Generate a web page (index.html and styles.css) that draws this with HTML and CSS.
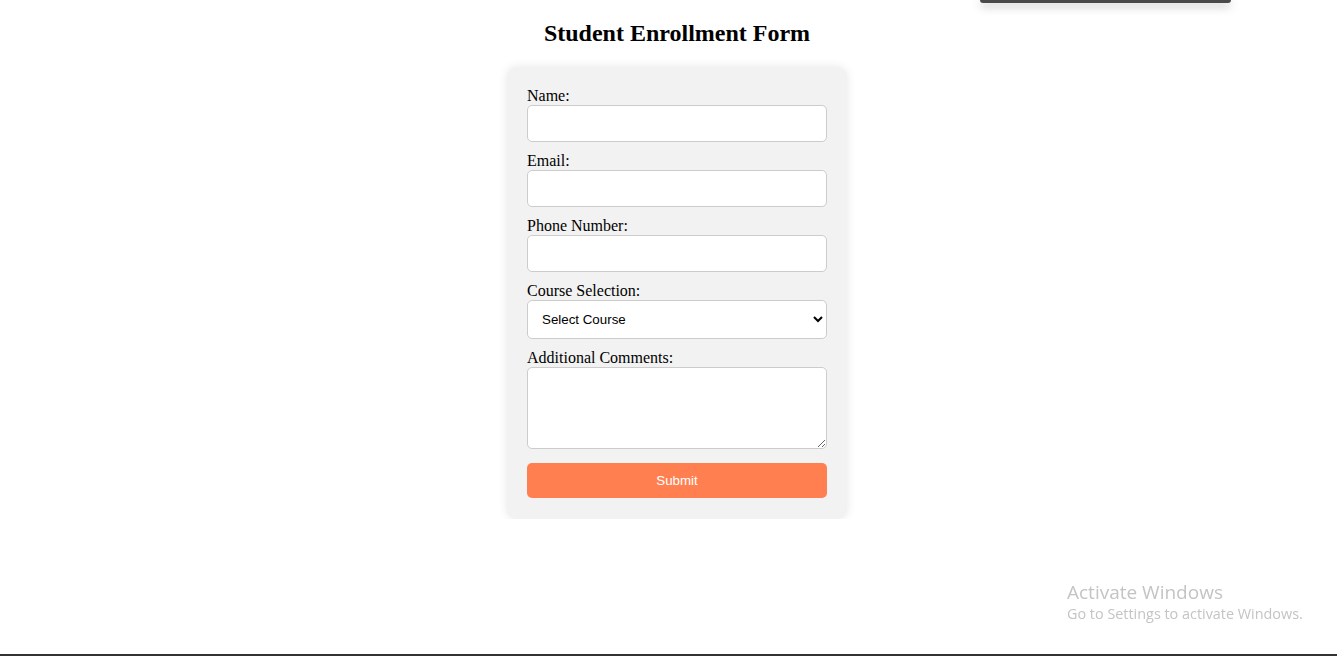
FILE: index.html
```html
<!DOCTYPE html>
<html lang="en">
<head>
<meta charset="utf-8">
<title>Student Enrollment Form</title>
<link rel="stylesheet" href="styles.css">
</head>
<body>
<div class="topbar"></div>
<h1 class="title">Student Enrollment Form</h1>
<form class="form">
  <label class="label" for="name">Name:</label>
  <input class="field" type="text" id="name">
  <label class="label" for="email">Email:</label>
  <input class="field" type="email" id="email">
  <label class="label" for="phone">Phone Number:</label>
  <input class="field" type="tel" id="phone">
  <label class="label" for="course">Course Selection:</label>
  <select class="field select" id="course">
    <option>Select Course</option>
  </select>
  <label class="label" for="comments">Additional Comments:</label>
  <textarea class="field area" id="comments" rows="4"></textarea>
  <button class="submit" type="button">Submit</button>
</form>
<div class="watermark">
  <div class="wm-title">Activate Windows</div>
  <div class="wm-sub">Go to Settings to activate Windows.</div>
</div>
<div class="bottomline"></div>
</body>
</html>
```
FILE: styles.css
```css
html, body {
  margin: 0;
  padding: 0;
  background: #fff;
}
body {
  font-family: "Liberation Serif", "Times New Roman", serif;
  font-size: 16px;
  color: #000;
  padding-top: 20px;
  padding-left: 17px;
}
.title {
  font-size: 24px;
  font-weight: bold;
  text-align: center;
  margin: 0 0 20px;
  line-height: 27px;
}
.form {
  width: 300px;
  margin: 0 auto;
  padding: 20px 20px 21px;
  background: #f2f2f2;
  border-radius: 10px;
  box-shadow: 0 0 10px rgba(0, 0, 0, 0.1);
}
.label {
  display: block;
  line-height: 18px;
}
.field {
  width: 100%;
  box-sizing: border-box;
  padding: 10px;
  margin: 0 0 10px;
  border: 1px solid #ccc;
  border-radius: 5px;
  font-family: "Liberation Sans", Arial, sans-serif;
  font-size: 13.33px;
  height: 37px;
  background: #fff;
}
.select {
  height: 39px;
  padding: 0 10px;
  color: #000;
}
.area {
  height: 82px;
  resize: vertical;
  vertical-align: top;
  margin-bottom: 14px;
}
.submit {
  display: block;
  width: 100%;
  height: 35px;
  border: none;
  border-radius: 5px;
  background: #ff7f50;
  color: #fff;
  font-family: "Liberation Sans", Arial, sans-serif;
  font-size: 13.33px;
  cursor: pointer;
}
.topbar {
  position: absolute;
  top: 0;
  left: 980px;
  width: 251px;
  height: 3px;
  background: #4a4a4a;
  border-radius: 0 0 6px 6px;
  box-shadow: 0 3px 10px rgba(0, 0, 0, 0.35);
}
.watermark {
  position: fixed;
  left: 1067px;
  top: 580px;
  color: #c4c4c4;
  font-family: "Open Sans", "Noto Sans", sans-serif;
}
.wm-title {
  font-size: 19px;
  line-height: 24px;
}
.wm-sub {
  font-size: 14.4px;
  line-height: 20px;
}
.bottomline {
  position: fixed;
  left: 0;
  right: 0;
  bottom: 0;
  height: 2px;
  background: #333;
}
```
